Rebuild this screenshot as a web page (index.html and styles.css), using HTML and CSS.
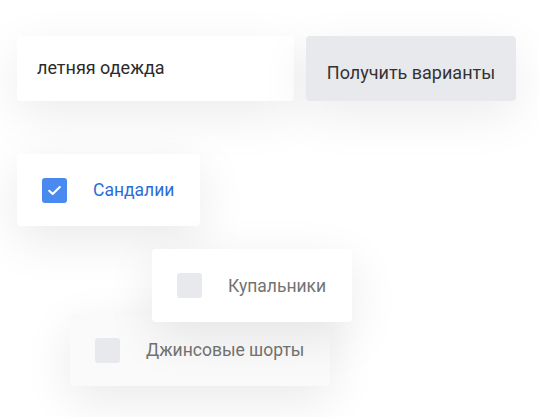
FILE: index.html
```html
<!DOCTYPE html>
<html lang="ru">
<head>
    <meta charset="UTF-8">
    <meta name="viewport" content="width=device-width, initial-scale=1.0">
    <title>Варианты</title>
    <link rel="stylesheet" href="styles.css">
</head>
<body>
    <div class="search-row">
        <div class="search-input">летняя одежда</div>
        <button class="search-button">Получить варианты</button>
    </div>

    <div class="options">
        <div class="option checked">
            <span class="box">
                <svg width="17" height="17" viewBox="0 0 16 16"><path d="M3 8.3 L6.3 11.2 L13 4.8" fill="none" stroke="#fff" stroke-width="2" stroke-linecap="round" stroke-linejoin="round"/></svg>
            </span>
            <span class="label">Сандалии</span>
        </div>
        <div class="option dragging">
            <span class="box"></span>
            <span class="label">Купальники</span>
        </div>
        <div class="option behind">
            <span class="box"></span>
            <span class="label">Джинсовые шорты</span>
        </div>
    </div>
</body>
</html>
```

FILE: styles.css
```css
* {
    margin: 0;
    padding: 0;
    box-sizing: border-box;
}
body {
    font-family: 'Roboto', 'Liberation Sans', sans-serif;
    background-color: #ffffff;
    color: #333333;
    padding: 36px 17px;
    height: 100vh;
    overflow: hidden;
}
/* Search row */
.search-row {
    display: flex;
    gap: 12px;
}
.search-input {
    width: 277px;
    height: 65px;
    background-color: #ffffff;
    border-radius: 4px;
    padding: 0 20px 2px;
    display: flex;
    align-items: center;
    font-size: 18px;
    color: #2b2b2b;
    box-shadow: 0px 14px 50px rgba(0, 0, 0, 0.08);
}
.search-button {
    width: 210px;
    height: 65px;
    background-color: #e8e9ec;
    border: none;
    border-radius: 4px;
    font-family: inherit;
    font-size: 18px;
    color: #333333;
    padding-top: 8px;
    box-shadow: 0px 14px 50px rgba(0, 0, 0, 0.08);
}
/* Options */
.options {
    margin-top: 53px;
    display: flex;
    flex-direction: column;
    align-items: flex-start;
}
.option {
    display: flex;
    align-items: center;
    gap: 26px;
    height: 72px;
    padding: 0 26px 0 25px;
    background-color: #ffffff;
    border-radius: 4px;
    font-size: 17.5px;
    color: #737373;
    box-shadow: 0px 14px 50px rgba(0, 0, 0, 0.09);
}
.box {
    width: 25px;
    height: 25px;
    border-radius: 3px;
    background-color: #e8e9ec;
    display: flex;
    align-items: center;
    justify-content: center;
}
.option.checked {
    color: #2a6dd9;
}
.option.checked .box {
    background-color: #4a89f0;
}
.option.dragging {
    position: relative;
    left: 135px;
    top: 23px;
    height: 73px;
    z-index: 2;
}
.option.behind {
    position: relative;
    left: 53px;
    top: 15px;
    background-color: #fafafa;
    z-index: 1;
}
```
